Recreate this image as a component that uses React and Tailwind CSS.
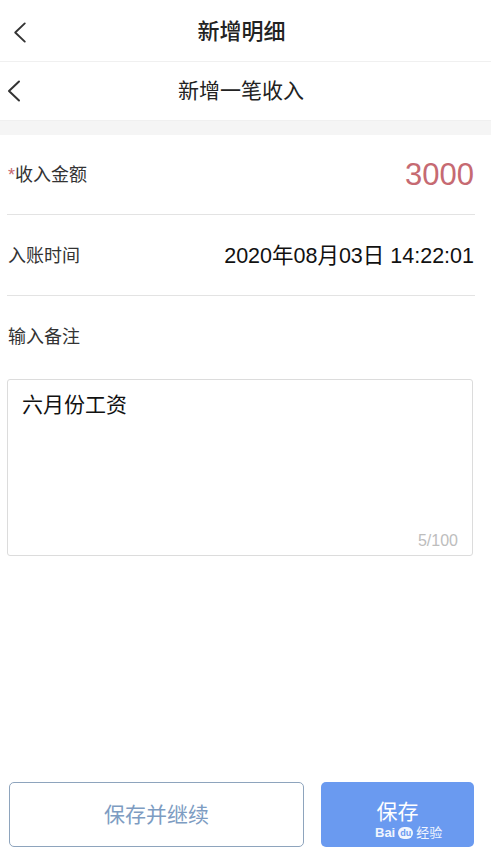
import React from "react";

const FONT = { fontFamily: '"Liberation Sans", "Noto Sans CJK SC", sans-serif' };

function Chevron({ className }) {
  return (
    <svg className={className} viewBox="0 0 14 22" fill="none" stroke="#333" strokeWidth="2" strokeLinecap="round" strokeLinejoin="round">
      <path d="M12 1.5 L2 11 L12 20.5" />
    </svg>
  );
}

export default function App() {
  return (
    <div className="min-h-[855px] w-full bg-white flex flex-col text-[#333]" style={FONT}>
      <div className="relative h-[62px] flex items-center justify-center border-b border-[#f0f0f0] pr-[8px] pt-[2px]">
        <Chevron className="absolute left-[13px] top-[22px] w-[14px] h-[21px]" />
        <span className="text-[22px] font-medium text-[#222]">新增明细</span>
      </div>
      <div className="relative h-[59px] flex items-center justify-center border-b border-[#f0f0f0] pr-[9px]">
        <Chevron className="absolute left-[7px] top-[18px] w-[14px] h-[22px]" />
        <span className="text-[21px] text-[#222]">新增一笔收入</span>
      </div>
      <div className="h-[14px] bg-[#f5f5f5]" />

      <div className="pl-[7px] pr-[16px]">
        <div className="h-[80px] flex items-center justify-between border-b border-[#e3e3e3] pl-[1px] pt-[1px]">
          <span className="text-[18px] text-[#333]"><span className="text-[#c66a72]">*</span>收入金额</span>
          <span className="text-[31px] text-[#c66a72] pr-[1px]">3000</span>
        </div>
        <div className="h-[81px] flex items-center justify-between border-b border-[#e3e3e3] pl-[1px] pt-[2px]">
          <span className="text-[18px] text-[#333]">入账时间</span>
          <span className="text-[21.5px] text-[#111] pr-[1px]">2020年08月03日 14:22:01</span>
        </div>
        <div className="h-[83px] flex items-center pl-[1px]">
          <span className="text-[18px] text-[#333]">输入备注</span>
        </div>
        <div className="relative w-[466px] h-[177px] border border-[#dcdcdc] rounded-[3px] px-[14px] pt-[9px]">
          <div className="text-[21px] text-[#111]">六月份工资</div>
          <div className="absolute right-[14px] bottom-[2px] text-[16px] text-[#bdbdbd]">5/100</div>
        </div>
      </div>

      <div className="mt-auto flex gap-[17px] pl-[9px] pr-[17px] pb-[8px]">
        <div className="w-[295px] h-[65px] border border-[#8ea4bd] rounded-[5px] flex items-center justify-center text-[21px] text-[#7d9cc2]">
          保存并继续
        </div>
        <div className="relative w-[153px] h-[65px] bg-[#6a9af0] rounded-[5px] flex items-center justify-center text-[21px] text-white">
          <span className="-mt-[6px]">保存</span>
          <div className="absolute left-[54px] top-[44px] flex items-center gap-[3px] text-white/90">
            <span className="text-[13px] font-bold leading-none">Bai</span>
            <span className="w-[15px] h-[12px] rounded-full bg-white/90 text-[#6a9af0] text-[9px] font-bold leading-[12px] text-center">du</span>
            <span className="text-[13px] leading-none">经验</span>
          </div>
        </div>
      </div>
    </div>
  );
}
